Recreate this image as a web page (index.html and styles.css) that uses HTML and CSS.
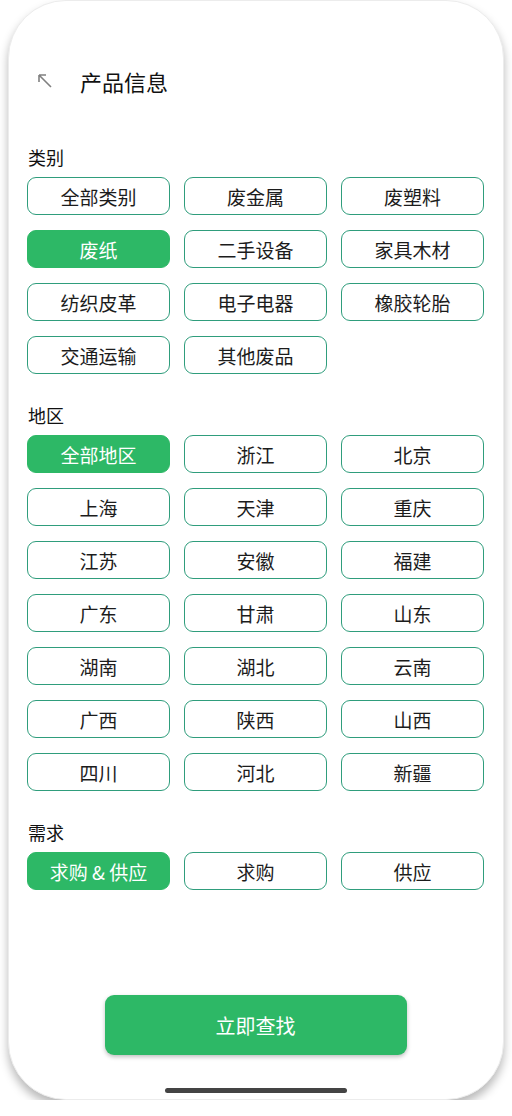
FILE: index.html
```html
<!doctype html>
<html lang="zh-CN">
<head>
    <meta charset="UTF-8">
    <title>产品信息</title>
    <link rel="stylesheet" href="styles.css">
</head>
<body>
<div class="phone">
    <!--顶部标题-->
    <div class="header">
        <svg class="back" width="16" height="16" viewBox="0 0 16 16">
            <path d="M2 2 L14 14 M2 2 L9 2 M2 2 L2 9" stroke="#808080" stroke-width="1.6" fill="none"/>
        </svg>
        <h1 class="title">产品信息</h1>
    </div>

    <!--类别-->
    <div class="section">
        <p class="label">类别</p>
        <div class="options">
            <span class="opt">全部类别</span>
            <span class="opt">废金属</span>
            <span class="opt">废塑料</span>
            <span class="opt active">废纸</span>
            <span class="opt">二手设备</span>
            <span class="opt">家具木材</span>
            <span class="opt">纺织皮革</span>
            <span class="opt">电子电器</span>
            <span class="opt">橡胶轮胎</span>
            <span class="opt">交通运输</span>
            <span class="opt">其他废品</span>
        </div>
    </div>

    <!--地区-->
    <div class="section">
        <p class="label">地区</p>
        <div class="options">
            <span class="opt active">全部地区</span>
            <span class="opt">浙江</span>
            <span class="opt">北京</span>
            <span class="opt">上海</span>
            <span class="opt">天津</span>
            <span class="opt">重庆</span>
            <span class="opt">江苏</span>
            <span class="opt">安徽</span>
            <span class="opt">福建</span>
            <span class="opt">广东</span>
            <span class="opt">甘肃</span>
            <span class="opt">山东</span>
            <span class="opt">湖南</span>
            <span class="opt">湖北</span>
            <span class="opt">云南</span>
            <span class="opt">广西</span>
            <span class="opt">陕西</span>
            <span class="opt">山西</span>
            <span class="opt">四川</span>
            <span class="opt">河北</span>
            <span class="opt">新疆</span>
        </div>
    </div>

    <!--需求-->
    <div class="section">
        <p class="label">需求</p>
        <div class="options">
            <span class="opt active">求购 &amp; 供应</span>
            <span class="opt">求购</span>
            <span class="opt">供应</span>
        </div>
    </div>

    <a class="submit" href="#">立即查找</a>
    <div class="home-bar"></div>
</div>
</body>
</html>
```

FILE: styles.css
```css
* {
    margin: 0;
    padding: 0;
    box-sizing: border-box;
}

body {
    background-color: #ffffff;
    font-family: "Noto Sans CJK SC", "Noto Sans", sans-serif;
    color: #111111;
}

.phone {
    margin-left: 8px;
    width: 496px;
    height: 1100px;
    background-color: #ffffff;
    border-radius: 58px;
    border: 1px solid #ececec;
    box-shadow: 0 6px 10px rgba(0, 0, 0, .28);
    display: flex;
    flex-direction: column;
    padding: 58px 19px 0 18px;
}

.header {
    height: 44px;
    display: flex;
    align-items: center;
}

.back {
    margin-left: 10px;
}

.title {
    margin-left: 27px;
    font-size: 22px;
    font-weight: normal;
    color: #111111;
}

.section {
    margin-top: 29px;
}

.header + .section {
    margin-top: 42px;
}

.label {
    font-size: 18px;
    line-height: 24px;
    padding-left: 1px;
}

.options {
    margin-top: 8px;
    display: grid;
    grid-template-columns: repeat(3, 143px);
    column-gap: 14px;
    row-gap: 15px;
}

.opt {
    height: 38px;
    border: 1.5px solid #2f9d7c;
    border-radius: 9px;
    display: flex;
    align-items: center;
    justify-content: center;
    font-size: 19px;
    color: #1c1c1c;
}

.opt.active {
    background-color: #2db866;
    border-color: #2db866;
    color: #ffffff;
}

.submit {
    margin-top: auto;
    align-self: center;
    width: 302px;
    height: 60px;
    border-radius: 9px;
    background-color: #2db866;
    box-shadow: 0 2px 4px rgba(0, 0, 0, .25);
    color: #ffffff;
    font-size: 20px;
    text-decoration: none;
    display: flex;
    align-items: center;
    justify-content: center;
}

.home-bar {
    align-self: center;
    width: 182px;
    height: 5px;
    border-radius: 3px;
    background-color: #444444;
    margin: 33px 0 6px;
}
```
